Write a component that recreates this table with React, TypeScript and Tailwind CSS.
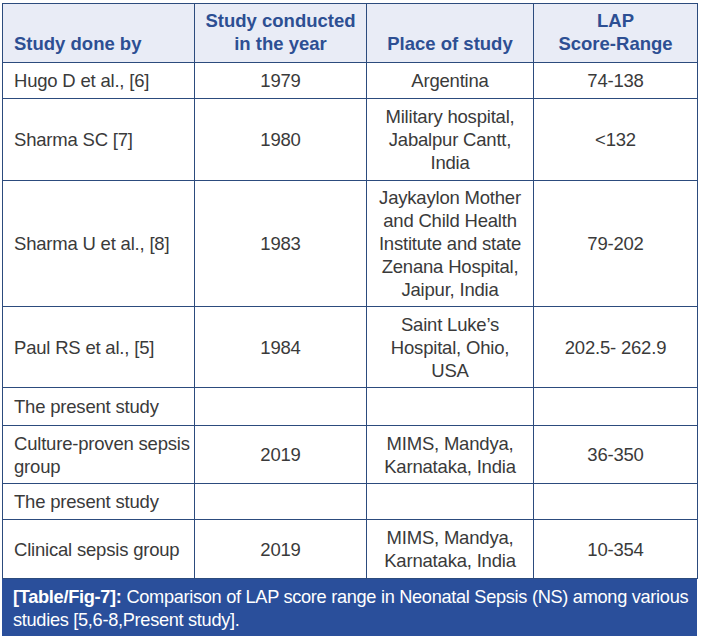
import React from "react";

const rows: { a: React.ReactNode; b: string; c: React.ReactNode; d: string; h: string }[] = [
  { a: "Hugo D et al., [6]", b: "1979", c: "Argentina", d: "74-138", h: "h-[36px]" },
  { a: "Sharma SC [7]", b: "1980", c: <>Military hospital,<br />Jabalpur Cantt,<br />India</>, d: "<132", h: "h-[82px]" },
  { a: "Sharma U et al., [8]", b: "1983", c: <>Jaykaylon Mother<br />and Child Health<br />Institute and state<br />Zenana Hospital,<br />Jaipur, India</>, d: "79-202", h: "h-[126px]" },
  { a: "Paul RS et al., [5]", b: "1984", c: <>Saint Luke’s<br />Hospital, Ohio,<br />USA</>, d: "202.5- 262.9", h: "h-[81px]" },
  { a: "The present study", b: "", c: "", d: "", h: "h-[38px]" },
  { a: <>Culture-proven sepsis<br />group</>, b: "2019", c: <>MIMS, Mandya,<br />Karnataka, India</>, d: "36-350", h: "h-[58px]" },
  { a: "The present study", b: "", c: "", d: "", h: "h-[36px]" },
  { a: "Clinical sepsis group", b: "2019", c: <>MIMS, Mandya,<br />Karnataka, India</>, d: "10-354", h: "h-[59px]" },
];

export default function App() {
  return (
    <div className="w-[702px] h-[637px] bg-white pt-[3px] pl-[2px]" style={{ fontFamily: '"Liberation Sans", Arial, sans-serif' }}>
      <div className="w-[695px]">
        <table className="w-[695px] border-collapse table-fixed text-[18.5px] leading-[23px] text-[#3a3a3a]">
          <colgroup>
            <col className="w-[192px]" />
            <col className="w-[172px]" />
            <col className="w-[167px]" />
            <col className="w-[164px]" />
          </colgroup>
          <thead>
            <tr className="bg-[#e9ecf6] h-[59px] text-[#2d4f93] font-bold">
              <th className="border border-[#2c4b7d] align-bottom text-left pl-[11px] pb-[7px] font-bold">Study done by</th>
              <th className="border border-[#2c4b7d] align-bottom text-center pb-[7px] font-bold">Study conducted<br />in the year</th>
              <th className="border border-[#2c4b7d] align-bottom text-center pb-[7px] font-bold">Place of study</th>
              <th className="border border-[#2c4b7d] align-bottom text-center pb-[7px] font-bold">LAP<br />Score-Range</th>
            </tr>
          </thead>
          <tbody>
            {rows.map((r, i) => (
              <tr key={i} className={r.h}>
                <td className="border border-[#2c4b7d] align-middle text-left pl-[11px] whitespace-nowrap tracking-[-0.2px]">{r.a}</td>
                <td className="border border-[#2c4b7d] align-middle text-center tracking-[-0.2px]">{r.b}</td>
                <td className="border border-[#2c4b7d] align-middle text-center tracking-[-0.2px]">{r.c}</td>
                <td className="border border-[#2c4b7d] align-middle text-center tracking-[-0.2px]">{r.d}</td>
              </tr>
            ))}
          </tbody>
        </table>
        <div className="bg-[#2a4f9b] text-white text-[18.2px] leading-[23px] h-[57px] pl-[11px] pr-[4px] pt-[7px] tracking-[-0.3px]">
          <span className="font-bold">[Table/Fig-7]:</span> Comparison of LAP score range in Neonatal Sepsis (NS) among various studies [5,6-8,Present study].
        </div>
      </div>
    </div>
  );
}
